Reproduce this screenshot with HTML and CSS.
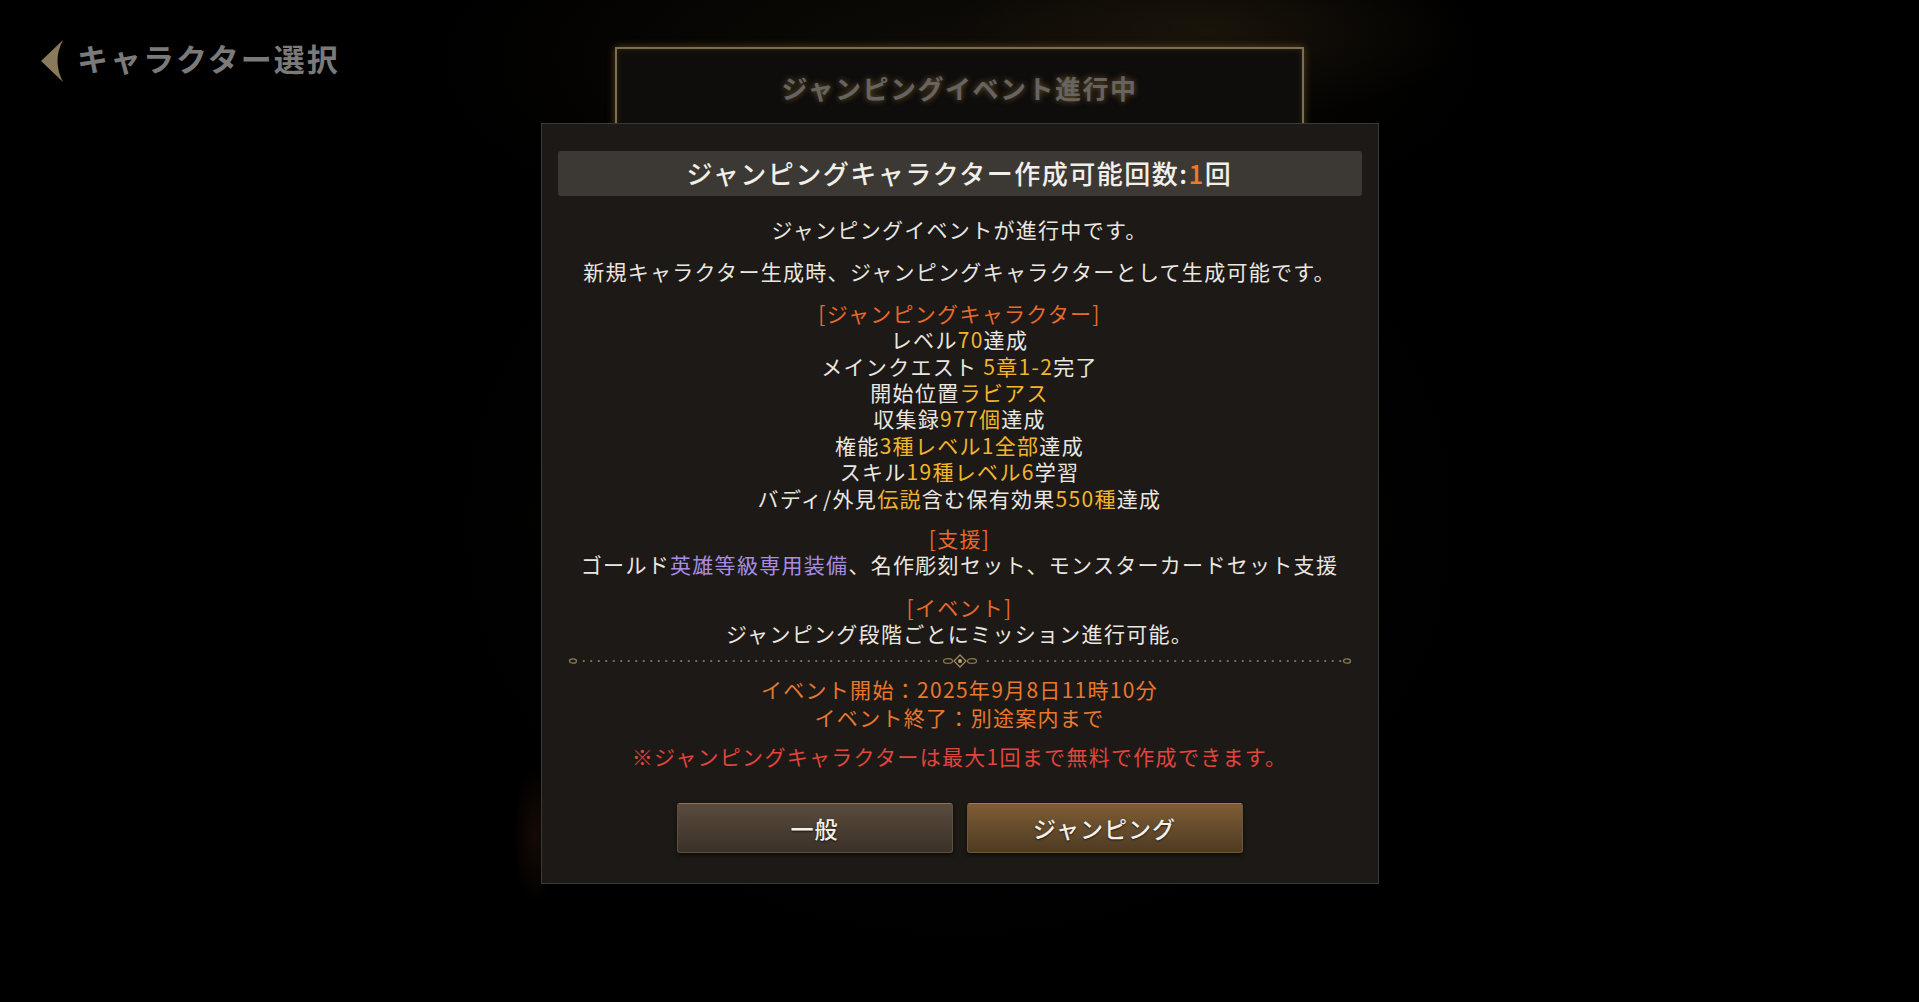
FILE: index.html
```html
<!DOCTYPE html>
<html lang="ja">
<head>
    <meta charset="UTF-8">
    <meta name="viewport" content="width=device-width, initial-scale=1.0">
    <title>ジャンピングキャラクター作成</title>
    <link rel="stylesheet" href="styles.css">
</head>
<body>
    <div class="scene">
        <div class="scene-top">
            <a class="back-link" href="#">
                <svg class="back-arrow" width="24" height="42" viewBox="0 0 24 42">
                    <path d="M23 0 L1 21 L23 42 Q12 21 23 0 Z" fill="#8a7a5c"/>
                </svg>
                <span>キャラクター選択</span>
            </a>
            <div class="event-banner">ジャンピングイベント進行中</div>
        </div>
    </div>

    <div class="overlay">
        <div class="dialog">
            <div class="dialog-header">ジャンピングキャラクター作成可能回数:<span class="orange">1</span>回</div>

            <p class="intro">ジャンピングイベントが進行中です。</p>
            <p class="intro second">新規キャラクター生成時、ジャンピングキャラクターとして生成可能です。</p>

            <div class="block first">
                <div class="block-title">[ジャンピングキャラクター]</div>
                <div>レベル<span class="gold">70</span>達成</div>
                <div>メインクエスト <span class="gold">5章1-2</span>完了</div>
                <div>開始位置<span class="gold">ラビアス</span></div>
                <div>収集録<span class="gold">977個</span>達成</div>
                <div>権能<span class="gold">3種レベル1全部</span>達成</div>
                <div>スキル<span class="gold">19種レベル6</span>学習</div>
                <div>バディ/外見<span class="gold">伝説</span>含む保有効果<span class="gold">550種</span>達成</div>
            </div>

            <div class="block">
                <div class="block-title">[支援]</div>
                <div>ゴールド<span class="purple">英雄等級専用装備</span>、名作彫刻セット、モンスターカードセット支援</div>
            </div>

            <div class="block events">
                <div class="block-title">[イベント]</div>
                <div>ジャンピング段階ごとにミッション進行可能。</div>
            </div>

            <div class="divider">
                <svg class="divider-end" width="10" height="8" viewBox="0 0 10 8">
                    <ellipse cx="5" cy="4" rx="3.5" ry="2.2" fill="none" stroke="#8c7a52" stroke-width="1.3"/>
                </svg>
                <span class="dots"></span>
                <svg class="divider-mid" width="44" height="14" viewBox="0 0 44 14">
                    <ellipse cx="10" cy="7" rx="4.5" ry="2.4" fill="none" stroke="#8c7a52" stroke-width="1.3"/>
                    <path d="M22 1 L28 7 L22 13 L16 7 Z" fill="none" stroke="#9c8a60" stroke-width="1.3"/>
                    <circle cx="22" cy="7" r="2" fill="#b8a377"/>
                    <ellipse cx="34" cy="7" rx="4.5" ry="2.4" fill="none" stroke="#8c7a52" stroke-width="1.3"/>
                </svg>
                <span class="dots"></span>
                <svg class="divider-end" width="10" height="8" viewBox="0 0 10 8">
                    <ellipse cx="5" cy="4" rx="3.5" ry="2.2" fill="none" stroke="#8c7a52" stroke-width="1.3"/>
                </svg>
            </div>

            <div class="event-dates">
                <div>イベント開始：2025年9月8日11時10分</div>
                <div>イベント終了：別途案内まで</div>
            </div>

            <p class="note">※ジャンピングキャラクターは最大1回まで無料で作成できます。</p>

            <div class="button-row">
                <button class="btn btn-normal">一般</button>
                <button class="btn btn-jump">ジャンピング</button>
            </div>
        </div>
    </div>
</body>
</html>
```

FILE: styles.css
```css
html, body {
    margin: 0;
    padding: 0;
}
body {
    width: 1919px;
    height: 1002px;
    overflow: hidden;
    position: relative;
    background-color: #000;
    font-family: "Noto Sans CJK JP", "Noto Sans", sans-serif;
    color: #ebe7e0;
}

/* background scene */
.scene {
    height: 100%;
    background:
        radial-gradient(ellipse 260px 90px at 1210px 30px, rgba(90, 70, 35, 0.22), transparent),
        radial-gradient(ellipse 520px 200px at 960px 60px, rgba(60, 48, 28, 0.25), transparent),
        radial-gradient(ellipse 22px 70px at 535px 835px, rgba(100, 45, 18, 0.22), transparent),
        radial-gradient(ellipse 500px 420px at 960px 520px, rgba(25, 20, 15, 0.5), transparent),
        #000;
}
.scene-top {
    display: grid;
    grid-template-columns: 1fr 689px 1fr;
    padding-top: 40px;
}
.back-link {
    display: flex;
    align-items: center;
    gap: 13px;
    padding-left: 40px;
    align-self: start;
    text-decoration: none;
    color: #7a7a7a;
    font-size: 31px;
    font-weight: 700;
    letter-spacing: 2px;
    height: 42px;
}
.back-link span {
    margin-top: -8px;
}
.back-arrow {
    display: block;
    flex-shrink: 0;
}
.event-banner {
    margin-top: 7px;
    height: 110px;
    box-sizing: border-box;
    border: 2px solid #7e6d4f;
    border-bottom: none;
    background: #0e0d0c;
    box-shadow: 0 0 8px rgba(170, 130, 60, 0.45), inset 0 0 6px rgba(170, 130, 60, 0.2);
    text-align: center;
    padding-top: 20px;
    font-size: 26px;
    font-weight: 700;
    letter-spacing: 1.5px;
    color: #666462;
    text-shadow: 0 0 6px rgba(190, 140, 60, 0.55);
}

/* dialog overlay */
.overlay {
    position: absolute;
    inset: 0;
    display: flex;
    justify-content: center;
    align-items: flex-start;
    padding-top: 123px;
}
.dialog {
    width: 838px;
    box-sizing: border-box;
    background: #1c1916;
    border: 1px solid #3b3935;
    padding: 27px 16px 30px;
    text-align: center;
    font-size: 21px;
    letter-spacing: 1.3px;
    line-height: 26.4px;
}
.dialog-header {
    height: 45px;
    display: flex;
    align-items: center;
    justify-content: center;
    background: #3c3934;
    border-radius: 3px;
    font-size: 26px;
    font-weight: 500;
    letter-spacing: 1.5px;
    color: #f2efe9;
}
.intro {
    margin: 20px 0 0;
}
.intro.second {
    margin-top: 16px;
}
.block {
    margin-top: 14px;
}
.block.first {
    margin-top: 15px;
}
.block.events {
    margin-top: 16px;
}
.block-title {
    color: #e8692c;
}
.orange {
    color: #ee7a2a;
}
.gold {
    color: #f2b52c;
}
.purple {
    color: #a98ce2;
}

.divider {
    margin: 10px 10px 0;
    height: 8px;
    display: flex;
    align-items: center;
}
.divider svg {
    display: block;
    flex-shrink: 0;
}
.divider-mid {
    margin: -3px 0;
}
.dots {
    flex: 1;
    height: 4px;
    background-image: radial-gradient(circle, #7f6f4e 0.9px, transparent 1.3px);
    background-size: 7.5px 4px;
    background-position: 2px 0;
}

.event-dates {
    margin-top: 10px;
    line-height: 28px;
    color: #e8782e;
}
.note {
    margin: 11px 0 0;
    line-height: 28px;
    color: #e2453c;
}

.button-row {
    margin-top: 33px;
    display: flex;
    justify-content: center;
    gap: 14px;
}
.btn {
    width: 276px;
    height: 50px;
    border-radius: 3px;
    font-family: "Noto Sans CJK JP", "Noto Sans", sans-serif;
    font-size: 23px;
    font-weight: 500;
    letter-spacing: 1px;
    color: #f3f0ea;
    text-shadow: 0 1px 2px rgba(0, 0, 0, 0.7);
    cursor: pointer;
    box-shadow: 0 2px 4px rgba(0, 0, 0, 0.6);
}
.btn-normal {
    background: linear-gradient(to bottom, #5a4b3c, #3a3129);
    border: 1px solid #5e5142;
    border-top-color: #8a7459;
}
.btn-jump {
    background: linear-gradient(to bottom, #7e5d33, #4e3b24);
    border: 1px solid #6f5636;
    border-top-color: #a07c4a;
}
```
